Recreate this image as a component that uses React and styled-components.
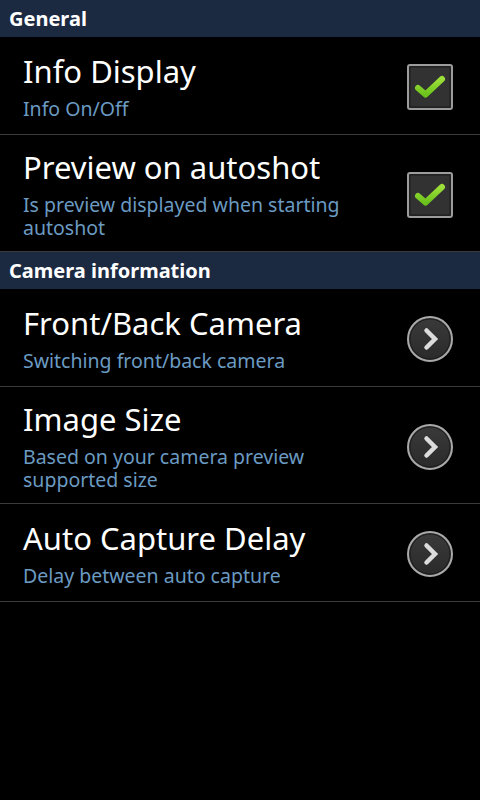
import React from 'react';
import styled, { createGlobalStyle } from 'styled-components';

const GlobalStyle = createGlobalStyle`
  html, body {
    margin: 0;
    padding: 0;
    background: #000;
  }
  body {
    font-family: "Noto Sans", "Open Sans", "DejaVu Sans", sans-serif;
    -webkit-font-smoothing: antialiased;
  }
`;

const Screen = styled.div`
  width: 480px;
  min-height: 800px;
  background: #000;
  display: flex;
  flex-direction: column;
`;

const SectionHeader = styled.div`
  height: 37px;
  line-height: 38px;
  padding: 0 9px;
  background: #1c2a41;
  color: #fff;
  font-size: 20px;
  font-weight: 700;
`;

const Row = styled.div`
  display: flex;
  align-items: center;
  box-sizing: border-box;
  min-height: 98px;
  padding: 15px 27px 12px 23px;
  border-bottom: 1px solid #3a3a3a;
`;

const Text = styled.div`
  flex: 1;
  display: flex;
  flex-direction: column;
`;

const Title = styled.div`
  color: #fff;
  font-size: 31px;
  line-height: 34px;
  white-space: nowrap;
`;

const Summary = styled.div`
  margin-top: 9px;
  color: #6b9bc2;
  font-size: 19.5px;
  line-height: 23px;
  max-width: 340px;
`;

const Widget = styled.div`
  width: 46px;
  height: 46px;
  flex: none;
  margin-left: 12px;
`;

const CheckIcon = () => (
  <svg width="46" height="46" viewBox="0 0 46 46">
    <defs>
      <linearGradient id="chk" x1="0" y1="0" x2="0" y2="1">
        <stop offset="0" stopColor="#9ee03a" />
        <stop offset="1" stopColor="#6cc21c" />
      </linearGradient>
    </defs>
    <rect x="1" y="1" width="44" height="44" rx="2" fill="#262626" stroke="#9c9c9c" strokeWidth="2" />
    <rect x="3" y="3" width="40" height="40" fill="#323232" stroke="#1c1c1c" strokeWidth="1" />
    <path d="M11 24 L18.5 30.5 L35 15" fill="none" stroke="url(#chk)" strokeWidth="6" strokeLinecap="round" strokeLinejoin="round" />
  </svg>
);

const ArrowIcon = () => (
  <svg width="46" height="46" viewBox="0 0 46 46">
    <defs>
      <linearGradient id="arr" x1="0" y1="0" x2="0" y2="1">
        <stop offset="0" stopColor="#3a3a3a" />
        <stop offset="1" stopColor="#2a2a2a" />
      </linearGradient>
    </defs>
    <circle cx="23" cy="23" r="22" fill="url(#arr)" stroke="#a9a9a9" strokeWidth="2" />
    <circle cx="23" cy="23" r="20" fill="none" stroke="#1c1c1c" strokeWidth="1" />
    <path d="M19.5 14.5 L28 23 L19.5 31.5" fill="none" stroke="#dcdcdc" strokeWidth="4.5" strokeLinecap="round" strokeLinejoin="miter" />
  </svg>
);

const sections = [
  {
    title: 'General',
    items: [
      { title: 'Info Display', summary: 'Info On/Off', kind: 'check' },
      { title: 'Preview on autoshot', summary: 'Is preview displayed when starting autoshot', kind: 'check' },
    ],
  },
  {
    title: 'Camera information',
    items: [
      { title: 'Front/Back Camera', summary: 'Switching front/back camera', kind: 'arrow' },
      { title: 'Image Size', summary: 'Based on your camera preview supported size', kind: 'arrow' },
      { title: 'Auto Capture Delay', summary: 'Delay between auto capture', kind: 'arrow' },
    ],
  },
];

const PrefRow = ({ title, summary, kind }) => (
  <Row>
    <Text>
      <Title>{title}</Title>
      <Summary>{summary}</Summary>
    </Text>
    <Widget>{kind === 'check' ? <CheckIcon /> : <ArrowIcon />}</Widget>
  </Row>
);

export default function App() {
  return (
    <>
      <GlobalStyle />
      <Screen>
        {sections.map((section) => (
          <React.Fragment key={section.title}>
            <SectionHeader>{section.title}</SectionHeader>
            {section.items.map((item) => (
              <PrefRow key={item.title} {...item} />
            ))}
          </React.Fragment>
        ))}
      </Screen>
    </>
  );
}
